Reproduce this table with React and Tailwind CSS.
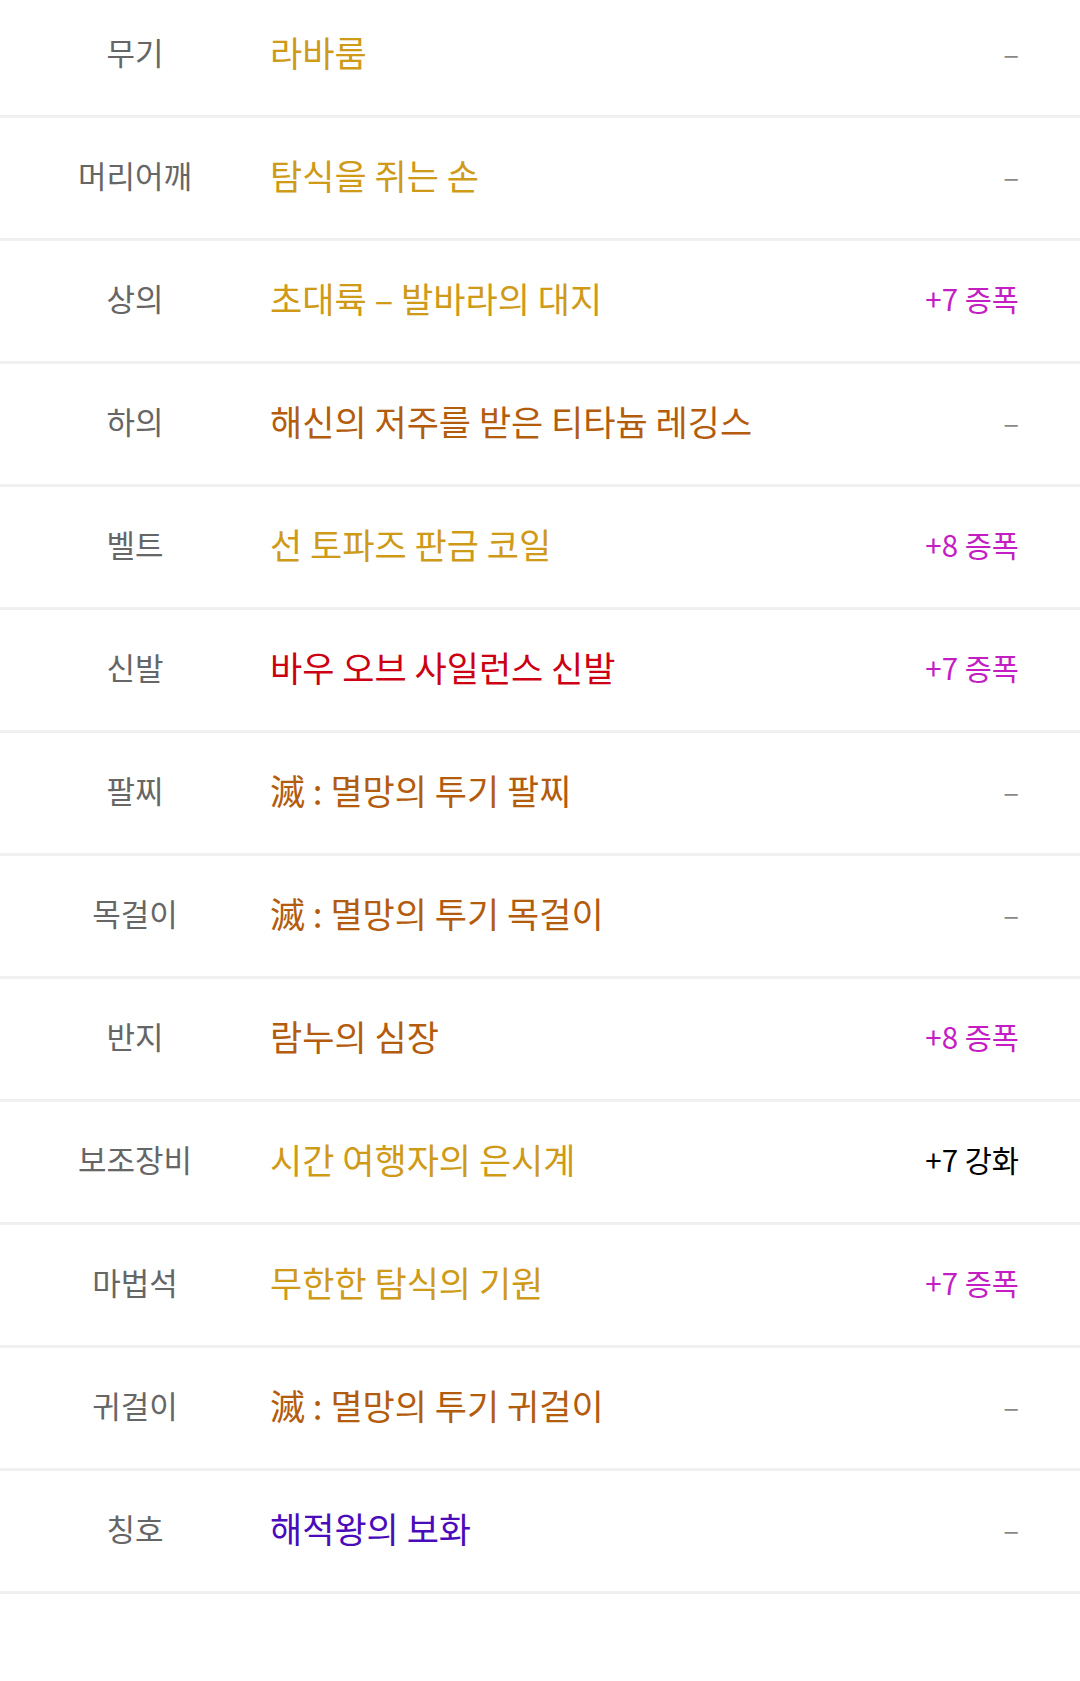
const GOLD = 'text-[#cf9a17]'
const BROWN = 'text-[#b35c0e]'

const rows = [
  { slot: '무기', name: '라바룸', color: GOLD, value: null },
  { slot: '머리어깨', name: '탐식을 쥐는 손', color: GOLD, value: null },
  { slot: '상의', name: '초대륙 – 발바라의 대지', color: GOLD, value: '+7 증폭', amp: true },
  { slot: '하의', name: '해신의 저주를 받은 티타늄 레깅스', color: BROWN, value: null },
  { slot: '벨트', name: '선 토파즈 판금 코일', color: GOLD, value: '+8 증폭', amp: true },
  { slot: '신발', name: '바우 오브 사일런스 신발', color: 'text-[#cc0012]', value: '+7 증폭', amp: true },
  { slot: '팔찌', name: '滅 : 멸망의 투기 팔찌', color: BROWN, value: null },
  { slot: '목걸이', name: '滅 : 멸망의 투기 목걸이', color: BROWN, value: null },
  { slot: '반지', name: '람누의 심장', color: BROWN, value: '+8 증폭', amp: true },
  { slot: '보조장비', name: '시간 여행자의 은시계', color: GOLD, value: '+7 강화', amp: false },
  { slot: '마법석', name: '무한한 탐식의 기원', color: GOLD, value: '+7 증폭', amp: true },
  { slot: '귀걸이', name: '滅 : 멸망의 투기 귀걸이', color: BROWN, value: null },
  { slot: '칭호', name: '해적왕의 보화', color: 'text-[#4a0cba]', value: null },
]

function Row({ slot, name, color, value, amp }) {
  return (
    <div className="flex h-[123px] items-center border-b-[3px] border-[#f0f0f0] bg-white pb-[6px]">
      <div className="w-[270px] text-center text-[31px] text-[#666666]">{slot}</div>
      <div className={`flex-1 text-[35px] ${color}`}>{name}</div>
      <div
        className={`pr-[61px] text-[29.5px] ${
          value ? (amp ? 'text-[#c41dc4]' : 'text-black') : 'text-[#888888]'
        }`}
      >
        {value || '–'}
      </div>
    </div>
  )
}

export default function App() {
  return (
    <div
      className="h-[1681px] w-[1080px] overflow-hidden bg-white"
      style={{ fontFamily: '"Noto Sans CJK KR", "Noto Sans", sans-serif' }}
    >
      <div className="-mt-[5px]">
        {rows.map((r) => (
          <Row key={r.slot} {...r} />
        ))}
      </div>
    </div>
  )
}
